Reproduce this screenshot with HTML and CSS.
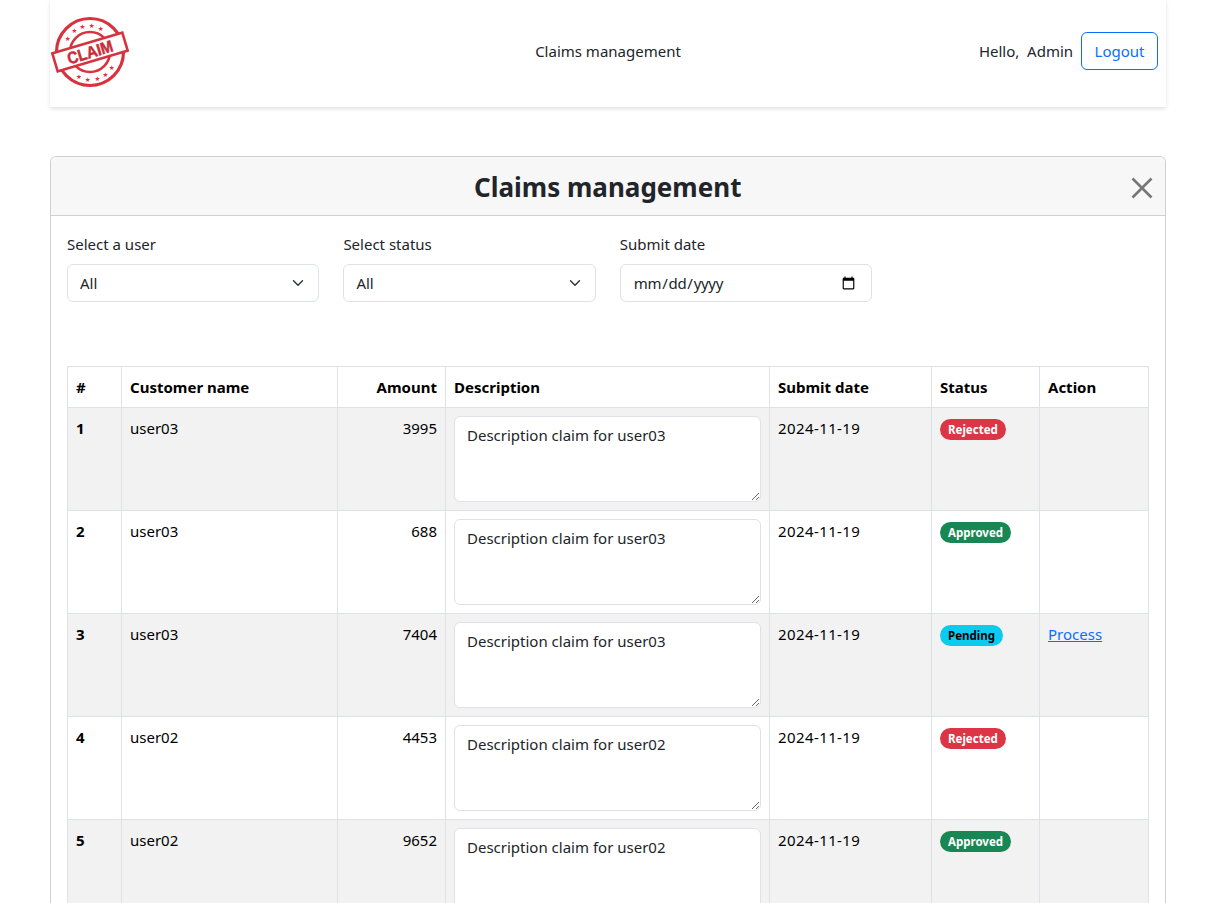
FILE: index.html
```html
<!DOCTYPE html>
<html lang="en">
<head>
<meta charset="utf-8">
<title>Claims management</title>
<link rel="stylesheet" href="styles.css">
</head>
<body>
<nav class="topbar">
  <div class="brand">
    <svg class="logo" viewBox="0 0 80 80" width="80" height="80" aria-label="Claim stamp">
      <circle cx="40" cy="40" r="33.5" fill="none" stroke="#d8323f" stroke-width="3.2"/>
      <circle cx="40" cy="40" r="20" fill="none" stroke="#d8323f" stroke-width="2.6"/>
      <g fill="#d8323f" font-size="6.5" font-family="DejaVu Sans" text-anchor="middle">
        <text x="17.7" y="29">★</text><text x="24.3" y="21.3">★</text><text x="32.3" y="17">★</text><text x="41.7" y="16.3">★</text><text x="50.7" y="19">★</text>
        <text x="29" y="67.3">★</text><text x="37.7" y="69.6">★</text><text x="47.3" y="68.6">★</text><text x="55.3" y="64.6">★</text><text x="61.7" y="58">★</text>
      </g>
      <g transform="rotate(-16.5 40 40)">
        <rect x="3.5" y="30.5" width="73" height="19" fill="#fff" stroke="#d8323f" stroke-width="2.6"/>
        <text class="logo-text" x="16.5" y="46" textLength="47" lengthAdjust="spacingAndGlyphs">CLAIM</text>
      </g>
    </svg>
  </div>
  <div class="nav-title">Claims management</div>
  <div class="nav-user">
    <span class="hello">Hello,&nbsp; Admin</span>
    <button class="btn-logout" type="button">Logout</button>
  </div>
</nav>

<section class="card">
  <header class="card-header">
    <h1>Claims management</h1>
    <svg class="close" viewBox="0 0 24 24" width="24" height="24" aria-label="Close">
      <path d="M2.5 2.5 L21.5 21.5 M21.5 2.5 L2.5 21.5" fill="none" stroke="#777" stroke-width="2.6"/>
    </svg>
  </header>
  <div class="card-body">
    <form class="filters">
      <div class="field">
        <label for="f-user">Select a user</label>
        <select id="f-user" class="control select"><option>All</option></select>
      </div>
      <div class="field">
        <label for="f-status">Select status</label>
        <select id="f-status" class="control select"><option>All</option></select>
      </div>
      <div class="field">
        <label for="f-date">Submit date</label>
        <input id="f-date" class="control date-input" type="date">
      </div>
    </form>

    <table class="claims">
      <colgroup>
        <col class="c-num"><col class="c-name"><col class="c-amount"><col class="c-desc"><col class="c-date"><col class="c-status"><col class="c-action">
      </colgroup>
      <thead>
        <tr><th>#</th><th>Customer name</th><th class="num">Amount</th><th>Description</th><th>Submit date</th><th>Status</th><th>Action</th></tr>
      </thead>
      <tbody>
        <tr class="odd">
          <th>1</th><td>user03</td><td class="num">3995</td>
          <td><textarea class="desc">Description claim for user03</textarea></td>
          <td class="date">2024-11-19</td><td><span class="badge rejected">Rejected</span></td><td></td>
        </tr>
        <tr>
          <th>2</th><td>user03</td><td class="num">688</td>
          <td><textarea class="desc">Description claim for user03</textarea></td>
          <td class="date">2024-11-19</td><td><span class="badge approved">Approved</span></td><td></td>
        </tr>
        <tr class="odd">
          <th>3</th><td>user03</td><td class="num">7404</td>
          <td><textarea class="desc">Description claim for user03</textarea></td>
          <td class="date">2024-11-19</td><td><span class="badge pending">Pending</span></td><td><a href="#">Process</a></td>
        </tr>
        <tr>
          <th>4</th><td>user02</td><td class="num">4453</td>
          <td><textarea class="desc">Description claim for user02</textarea></td>
          <td class="date">2024-11-19</td><td><span class="badge rejected">Rejected</span></td><td></td>
        </tr>
        <tr class="odd">
          <th>5</th><td>user02</td><td class="num">9652</td>
          <td><textarea class="desc">Description claim for user02</textarea></td>
          <td class="date">2024-11-19</td><td><span class="badge approved">Approved</span></td><td></td>
        </tr>
      </tbody>
    </table>
  </div>
</section>
</body>
</html>
```

FILE: styles.css
```css
* { box-sizing: border-box; }
html { overflow: hidden; height: 100%; }
body {
  margin: 0;
  padding: 0 45px 0 50px;
  height: 100%;
  overflow: hidden;
  background: #fff;
  color: #212529;
  font-family: "Noto Sans", "Open Sans", sans-serif;
  font-size: 15px;
  line-height: 24px;
}

.topbar {
  display: grid;
  grid-template-columns: 1fr auto 1fr;
  align-items: center;
  height: 107px;
  padding: 0 8px 5px 8px;
  background: #fff;
  box-shadow: 0 2px 4px rgba(0, 0, 0, .12);
}
.brand { display: flex; align-items: center; }
.logo { display: block; margin: 2px 0 0 -8px; }
.logo-text { font: 700 16.5px "Liberation Sans", sans-serif; fill: #c92c3a; stroke: #c92c3a; stroke-width: .5px; }
.nav-title { text-align: center; }
.nav-user { display: flex; justify-content: flex-end; align-items: center; gap: 8px; }
.btn-logout {
  height: 38px;
  padding: 0 12.5px;
  border: 1px solid #0d6efd;
  border-radius: 6px;
  background: #fff;
  color: #0d6efd;
  font: inherit;
}

.card {
  margin: 49px .5px 0 0;
  border: 1px solid #d0d0d0;
  border-bottom: 0;
  border-radius: 6px 6px 0 0;
}
.card-header {
  position: relative;
  height: 59px;
  display: flex;
  align-items: center;
  justify-content: center;
  padding-top: 1px;
  background: #f7f7f7;
  border-bottom: 1px solid #d0d0d0;
  border-radius: 5px 5px 0 0;
}
.card-header h1 { margin: 0; font-size: 26px; font-weight: 700; line-height: 32px; }
.close { position: absolute; right: 11px; top: 19px; }

.card-body { padding: 16px; }
.filters {
  display: grid;
  grid-template-columns: repeat(4, 1fr);
  gap: 24px;
  margin-bottom: 64px;
}
.field label { display: block; margin-bottom: 8px; }
.control {
  display: block;
  width: 100%;
  height: 38px;
  padding: 6px 12px;
  border: 1px solid #dee2e6;
  border-radius: 6px;
  background-color: #fff;
  color: #212529;
  font: inherit;
}
.date-input { letter-spacing: -.3px; padding-right: 13px; }
.select {
  appearance: none;
  padding-right: 36px;
  background-image: url("data:image/svg+xml,%3csvg xmlns='http://www.w3.org/2000/svg' viewBox='0 0 16 16'%3e%3cpath fill='none' stroke='%23343a40' stroke-linecap='round' stroke-linejoin='round' stroke-width='2' d='m2 5 6 6 6-6'/%3e%3c/svg%3e");
  background-repeat: no-repeat;
  background-position: right 12px center;
  background-size: 16px 12px;
}

.claims {
  width: calc(100% - 1px);
  table-layout: fixed;
  border-collapse: collapse;
  color: #000;
}
.c-num { width: 54px; }
.c-name { width: 216px; }
.c-amount { width: 108px; }
.c-desc { width: 324px; }
.c-date { width: 162px; }
.c-status { width: 108px; }
.c-action { width: 108.5px; }
.claims th, .claims td {
  padding: 8px;
  border: 1px solid #dee2e6;
  text-align: left;
  vertical-align: top;
}
.claims .num { text-align: right; }
.claims th { font-weight: 700; }
.claims .date { letter-spacing: .4px; }
.odd th, .odd td { background: #f2f2f2; }
.desc {
  display: block;
  width: 100%;
  height: 86px;
  padding: 6px 12px;
  border: 1px solid #dee2e6;
  border-radius: 6px;
  background: #fff;
  color: #212529;
  font: inherit;
}
.badge {
  display: inline-block;
  padding: 4px 8px;
  border-radius: 50rem;
  font-size: 11.5px;
  font-weight: 700;
  line-height: 13px;
  color: #fff;
}
.rejected { background: #dc3545; }
.approved { background: #198754; }
.pending { background: #0dcaf0; color: #000; }
a { color: #0d6efd; }
```
